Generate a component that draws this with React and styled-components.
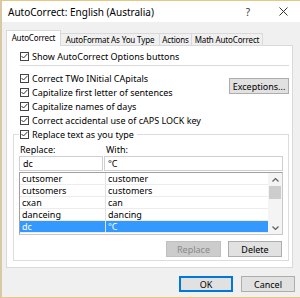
import styled, { createGlobalStyle } from 'styled-components'

const Global = createGlobalStyle`
  body {
    margin: 0;
    font-family: "Noto Sans", "Open Sans", Arial, sans-serif;
    color: #000;
  }
`

const Outer = styled.div`
  width: 300px;
  height: 298px;
  padding-left: 1px;
  background: #c9c9c9;
  box-sizing: border-box;
  display: flex;
  overflow: hidden;
`

const Window = styled.div`
  flex: 1;
  display: flex;
  flex-direction: column;
  background: #f0f0f0;
  border: 1px solid #ebc584;
  border-right: none;
  box-sizing: border-box;
`

const TitleBar = styled.div`
  height: 21px;
  flex-shrink: 0;
  background: #fff;
  display: flex;
  align-items: center;
  padding-left: 6px;
  font-size: 10px;
`

const Title = styled.span`
  flex: 1;
`

const TitleButton = styled.span`
  width: 30px;
  height: 21px;
  display: flex;
  align-items: center;
  justify-content: center;
  color: #333;
  font-size: 10px;
  margin-right: ${p => p.$last ? '2px' : '5px'};
`

const Body = styled.div`
  flex: 1;
  padding: 8px 0 0 4px;
  display: flex;
  flex-direction: column;
`

const Tabs = styled.div`
  display: flex;
  align-items: flex-end;
  height: 15px;
  position: relative;
  z-index: 1;
`

const Tab = styled.div`
  box-sizing: border-box;
  width: ${p => p.$w}px;
  height: ${p => p.$active ? 16 : 12}px;
  margin-bottom: ${p => p.$active ? -1 : 0}px;
  background: ${p => p.$active ? '#fff' : '#f0f0f0'};
  border: 1px solid #d9d9d9;
  border-left: ${p => p.$active ? '1px solid #d9d9d9' : 'none'};
  border-bottom: none;
  font-size: 8px;
  letter-spacing: -0.15px;
  display: flex;
  align-items: center;
  justify-content: center;
  white-space: nowrap;
  overflow: hidden;
  padding-bottom: ${p => p.$active ? 2 : 0}px;
`

const Panel = styled.div`
  width: 287px;
  height: 223px;
  box-sizing: border-box;
  background: #fff;
  border: 1px solid #d9d9d9;
  display: flex;
  flex-direction: column;
  font-size: 9px;
`

const CheckRow = styled.label`
  height: 14px;
  display: flex;
  align-items: center;
  gap: 3px;
  white-space: nowrap;
  padding-left: ${p => p.$indent || 0}px;
  margin-top: ${p => p.$top || 0}px;
`

const Box = styled.span`
  width: 9px;
  height: 9px;
  box-sizing: border-box;
  border: 1px solid #444;
  background: #fff;
  display: flex;
  align-items: center;
  justify-content: center;
  flex-shrink: 0;
`

const Separator = styled.div`
  height: 1px;
  background: #dadada;
  margin: 2px 3px 5px 13px;
`

const OptionsBlock = styled.div`
  display: flex;
  justify-content: space-between;
`

const Column = styled.div`
  display: flex;
  flex-direction: column;
`

const Button = styled.button`
  box-sizing: border-box;
  width: ${p => p.$w}px;
  height: 16px;
  padding: 0;
  font-family: inherit;
  font-size: 9px;
  color: ${p => p.$disabled ? '#8a8a8a' : '#000'};
  background: ${p => p.$disabled ? '#cccccc' : '#e1e1e1'};
  border: ${p => p.$default ? '2px solid #0078d7' : `1px solid ${p.$disabled ? '#bfbfbf' : '#adadad'}`};
  margin-top: ${p => p.$top || 0}px;
  margin-right: ${p => p.$right || 0}px;
`

const Group = styled.div`
  margin: 7px 3px 0 6px;
  height: 127px;
  box-sizing: border-box;
  border: 1px solid #dcdcdc;
  padding: 0 5px;
  display: flex;
  flex-direction: column;
`

const Legend = styled.div`
  margin-top: -8px;
  align-self: flex-start;
  background: #fff;
  padding: 0 3px 0 1px;
`

const Labels = styled.div`
  display: flex;
  height: 12px;
  margin-top: 2px;
  align-items: center;
`

const Label = styled.span`
  width: ${p => p.$w}px;
  padding-left: 1px;
`

const Inputs = styled.div`
  display: flex;
  gap: 1px;
  margin-top: 1px;
`

const Input = styled.div`
  box-sizing: border-box;
  width: ${p => p.$w}px;
  height: 15px;
  border: 1px solid #cfcfcf;
  background: #fff;
  display: flex;
  align-items: center;
  padding-left: 3px;
`

const List = styled.div`
  margin-top: 1px;
  box-sizing: border-box;
  width: 264px;
  height: 63px;
  border: 1px solid #c8c8c8;
  border-top-color: #a0a0a0;
  border-left-color: #a0a0a0;
  display: flex;
`

const Rows = styled.div`
  flex: 1;
  display: flex;
  flex-direction: column;
`

const Row = styled.div`
  height: 12px;
  box-sizing: border-box;
  display: flex;
  border-bottom: 1px solid #ececec;
  background: ${p => p.$selected ? '#3399ff' : '#fff'};
  color: ${p => p.$selected ? '#fff' : '#000'};
`

const Cell = styled.div`
  width: ${p => p.$w ? `${p.$w}px` : 'auto'};
  flex: ${p => p.$w ? 'none' : 1};
  box-sizing: border-box;
  padding-left: 2px;
  display: flex;
  align-items: center;
  border-right: ${p => p.$w ? '1px solid #e2e2e2' : 'none'};
`

const Scrollbar = styled.div`
  width: 14px;
  background: #f4f4f4;
  display: flex;
  flex-direction: column;
  align-items: center;
  justify-content: space-between;
`

const Arrow = styled.div`
  height: 13px;
  display: flex;
  align-items: center;
  justify-content: center;
`

const Thumb = styled.div`
  width: 12px;
  height: 13px;
  background: #cdcdcd;
  margin-bottom: auto;
`

const ButtonRow = styled.div`
  display: flex;
  justify-content: flex-end;
  gap: 7px;
  margin: 6px 1px 0 0;
`

const Footer = styled.div`
  display: flex;
  justify-content: flex-end;
  gap: 8px;
  margin-top: 8px;
  padding-right: 5px;
`

const Check = () => (
  <Box>
    <svg width="7" height="6" viewBox="0 0 7 6">
      <path d="M0.5 3 L2.5 5 L6.5 0.8" fill="none" stroke="#333" strokeWidth="1" />
    </svg>
  </Box>
)

const Chevron = ({ up }) => (
  <svg width="7" height="4" viewBox="0 0 7 4">
    <path d={up ? 'M0.5 3.5 L3.5 0.5 L6.5 3.5' : 'M0.5 0.5 L3.5 3.5 L6.5 0.5'} fill="none" stroke="#606060" strokeWidth="1.2" />
  </svg>
)

const entries = [
  ['cutsomer', 'customer'],
  ['cutsomers', 'customers'],
  ['cxan', 'can'],
  ['danceing', 'dancing'],
  ['dc', '°C'],
]

const options = [
  'Correct TWo INitial CApitals',
  'Capitalize first letter of sentences',
  'Capitalize names of days',
  'Correct accidental use of cAPS LOCK key',
]

export default function App() {
  return (
    <>
      <Global />
      <Outer>
        <Window>
          <TitleBar>
            <Title>AutoCorrect: English (Australia)</Title>
            <TitleButton>?</TitleButton>
            <TitleButton $last>
              <svg width="9" height="9" viewBox="0 0 9 9">
                <path d="M0.5 0.5 L8.5 8.5 M8.5 0.5 L0.5 8.5" stroke="#333" strokeWidth="1" />
              </svg>
            </TitleButton>
          </TitleBar>
          <Body>
            <Tabs>
              <Tab $active $w={55}>AutoCorrect</Tab>
              <Tab $w={99}>AutoFormat As You Type</Tab>
              <Tab $w={32}>Actions</Tab>
              <Tab $w={71}>Math AutoCorrect</Tab>
            </Tabs>
            <Panel>
              <CheckRow $indent={13} $top={3}>
                <Check />Show AutoCorrect Options buttons
              </CheckRow>
              <Separator />
              <OptionsBlock>
                <Column>
                  {options.map(o => (
                    <CheckRow key={o} $indent={13}><Check />{o}</CheckRow>
                  ))}
                </Column>
                <Button $w={60} $top={7} $right={3}>Exceptions...</Button>
              </OptionsBlock>
              <Group>
                <Legend>
                  <CheckRow><Check />Replace text as you type</CheckRow>
                </Legend>
                <Labels>
                  <Label $w={85}>Replace:</Label>
                  <Label>With:</Label>
                </Labels>
                <Inputs>
                  <Input $w={84}>dc</Input>
                  <Input $w={179}>°C</Input>
                </Inputs>
                <List>
                  <Rows>
                    {entries.map(([a, b], i) => (
                      <Row key={a} $selected={i === entries.length - 1}>
                        <Cell $w={86}>{a}</Cell>
                        <Cell>{b}</Cell>
                      </Row>
                    ))}
                  </Rows>
                  <Scrollbar>
                    <Arrow><Chevron up /></Arrow>
                    <Thumb />
                    <Arrow><Chevron /></Arrow>
                  </Scrollbar>
                </List>
                <ButtonRow>
                  <Button $w={55} $disabled>Replace</Button>
                  <Button $w={54}>Delete</Button>
                </ButtonRow>
              </Group>
            </Panel>
            <Footer>
              <Button $w={54} $default>OK</Button>
              <Button $w={54}>Cancel</Button>
            </Footer>
          </Body>
        </Window>
      </Outer>
    </>
  )
}
